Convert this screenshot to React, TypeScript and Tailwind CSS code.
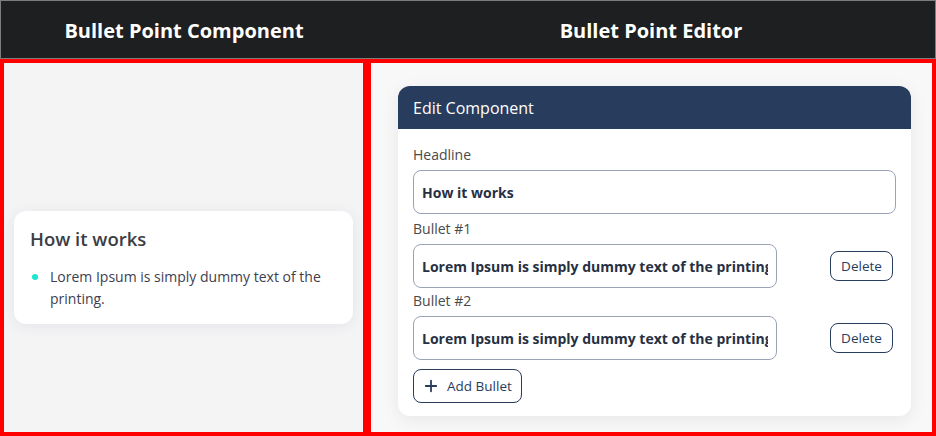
import { Plus } from "lucide-react";

const body = { fontFamily: '"Open Sans", "Noto Sans", sans-serif' };

const BulletInput = ({ value, bold = true }: { value: string; bold?: boolean }) => (
  <input
    readOnly
    defaultValue={value}
    className={`h-[44px] w-full rounded-lg border border-[#9aa3b5] bg-white px-2 text-sm text-[#273043] outline-none ${bold ? "font-bold" : ""}`}
    style={body}
  />
);

const bullets = [
  "Lorem Ipsum is simply dummy text of the printing and typesetting industry.",
  "Lorem Ipsum is simply dummy text of the printing and typesetting industry.",
];

export default function App() {
  return (
    <div className="flex h-[436px] w-[936px] flex-col bg-white" style={body}>
      {/* Titles */}
      <div className="flex h-[59px] shrink-0 border border-[#7d7d7d] bg-[#1e1f21] text-white">
        <div className="flex w-[366px] items-center justify-center pt-[3px] text-[20px] font-bold">
          Bullet Point Component
        </div>
        <div className="flex flex-1 items-center justify-center pt-[3px] text-[20px] font-bold">
          Bullet Point Editor
        </div>
      </div>

      <div className="flex min-h-0 flex-1">
        {/* Preview */}
        <div className="flex w-[367px] items-center border-4 border-[#ff0000] bg-[#f4f4f5] px-[10px] pt-[40px]">
          <div className="w-full rounded-xl bg-white px-4 pb-[14px] pt-[14px] shadow-[0_2px_14px_rgba(40,50,90,0.08)]">
            <h2 className="text-[18.5px] font-semibold text-[#3b3d45]">How it works</h2>
            <ul className="mt-[13px]">
              <li className="flex items-start gap-[12px] text-sm leading-[22px] text-[#3d4050]">
                <span className="mt-[8px] ml-[2px] h-[6px] w-[6px] shrink-0 rounded-full bg-[#19e6cf]" />
                <span>Lorem Ipsum is simply dummy text of the printing.</span>
              </li>
            </ul>
          </div>
        </div>

        {/* Editor */}
        <div className="flex-1 border-4 border-[#ff0000] bg-[#f8f8f8] pl-[27px] pr-[21px] pt-[23px]">
          <div className="overflow-hidden rounded-xl bg-white shadow-[0_4px_18px_rgba(0,0,0,0.07)]">
            <div className="flex h-[43px] items-center bg-[#283c5e] px-[15px] text-base text-white">
              Edit Component
            </div>
            <div className="px-[15px] pb-[13px] pt-[16px]">
              <div className="mb-[5px] text-sm leading-5 text-[#4a4a4a]">Headline</div>
              <BulletInput value="How it works" />

              {bullets.map((b, i) => (
                <div key={i} className={i === 0 ? "mt-[5px]" : "mt-[3px]"}>
                  <div className="mb-[5px] text-sm leading-5 text-[#4a4a4a]">Bullet #{i + 1}</div>
                  <div className="flex items-center justify-between pr-[3px]">
                    <div className="w-[364px]">
                      <BulletInput value={b} />
                    </div>
                    <button className="h-[30px] w-[63px] rounded-lg border border-[#283c5e] bg-white text-[13.5px] text-[#283c5e]">
                      Delete
                    </button>
                  </div>
                </div>
              ))}

              <button className="mt-[9px] flex h-[34px] items-center gap-[7px] rounded-lg border border-[#283c5e] bg-white pl-[8px] pr-[9px] text-[13.5px] text-[#283c5e]">
                <Plus size={18} strokeWidth={2.4} />
                Add Bullet
              </button>
            </div>
          </div>
        </div>
      </div>
    </div>
  );
}
